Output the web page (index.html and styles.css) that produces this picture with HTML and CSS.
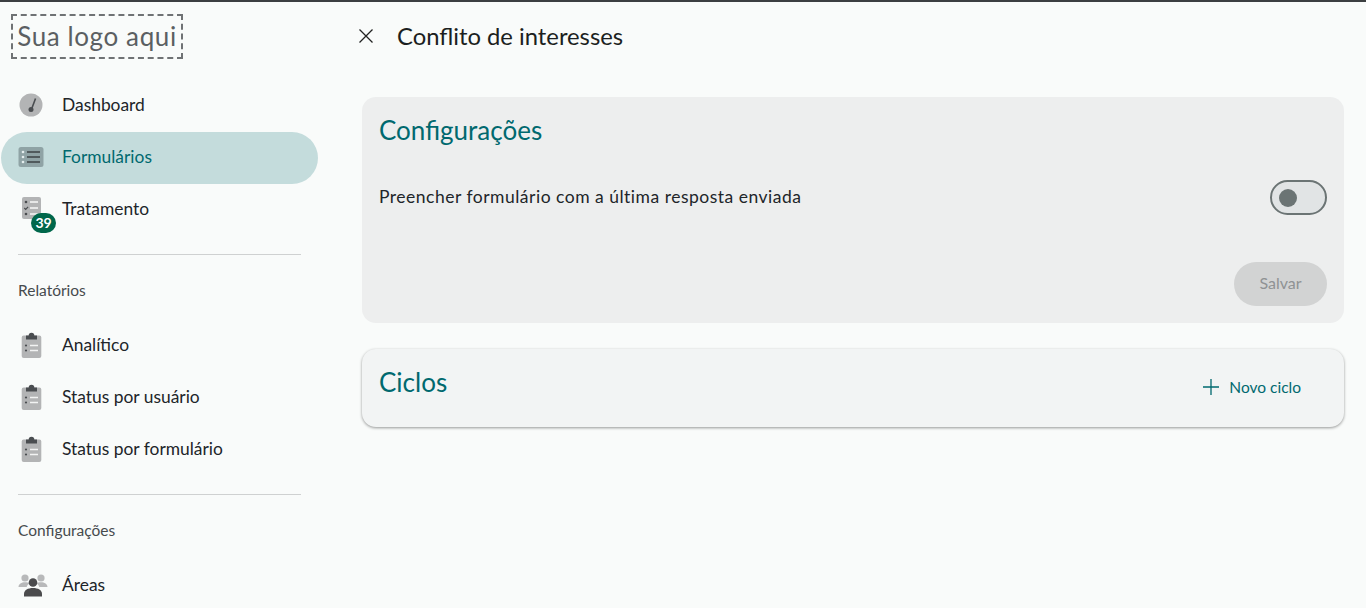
FILE: index.html
```html
<!DOCTYPE html>
<html lang="pt-BR">
<head>
    <meta charset="UTF-8">
    <meta name="viewport" content="width=device-width, initial-scale=1.0">
    <title>Conflito de interesses</title>
    <link rel="stylesheet" href="styles.css">
</head>
<body>
    <div class="app">
        <aside class="sidebar">
            <div class="logo">Sua logo aqui</div>
            <nav class="nav">
                <a class="nav-item">
                    <span class="nav-icon">
                        <svg width="26" height="26" viewBox="0 0 26 26"><circle cx="13" cy="13" r="11.5" fill="#b3b4b5"/><path d="M17.500 6.500 L14 16" stroke="#4a4d50" stroke-width="1.600" fill="none"/><circle cx="13" cy="17.500" r="2.500" fill="#4a4d50"/></svg>
                    </span>
                    Dashboard
                </a>
                <a class="nav-item active">
                    <span class="nav-icon">
                        <svg width="26" height="26" viewBox="0 0 26 26"><rect x="0.500" y="3" width="25" height="20" rx="2.500" fill="#8fa3a5"/><path d="M9 8h13M9 13h13M9 18h13" stroke="#3e4446" stroke-width="1.700"/><circle cx="5" cy="8" r="1.300" fill="#e4eeee"/><circle cx="5" cy="13" r="1.300" fill="#e4eeee"/><circle cx="5" cy="18" r="1.300" fill="#e4eeee"/></svg>
                    </span>
                    Formulários
                </a>
                <a class="nav-item">
                    <span class="nav-icon">
                        <svg width="26" height="26" viewBox="0 0 26 26"><rect x="4" y="1" width="19" height="22" rx="2" fill="#b3b4b5"/><path d="M12 6h8M12 12h8M12 18h8" stroke="#f7f8f8" stroke-width="1.600"/><circle cx="8" cy="6" r="1.300" fill="#4a4d50"/><path d="M6.300 12l1.400 1.400 2.400-2.600" stroke="#4a4d50" stroke-width="1.200" fill="none"/><circle cx="8" cy="18" r="1.300" fill="#4a4d50"/></svg>
                        <span class="badge">39</span>
                    </span>
                    Tratamento
                </a>
            </nav>
            <hr class="divider">
            <div class="section-label">Relatórios</div>
            <nav class="nav">
                <a class="nav-item">
                    <span class="nav-icon"><svg width="26" height="28" viewBox="0 0 26 28"><use href="#clip"/></svg></span>
                    Analítico
                </a>
                <a class="nav-item">
                    <span class="nav-icon"><svg width="26" height="28" viewBox="0 0 26 28"><use href="#clip"/></svg></span>
                    Status por usuário
                </a>
                <a class="nav-item">
                    <span class="nav-icon"><svg width="26" height="28" viewBox="0 0 26 28"><use href="#clip"/></svg></span>
                    Status por formulário
                </a>
            </nav>
            <hr class="divider second">
            <div class="section-label">Configurações</div>
            <nav class="nav">
                <a class="nav-item">
                    <span class="nav-icon">
                        <svg width="30" height="24" viewBox="0 0 30 24"><circle cx="7" cy="5" r="3.600" fill="#b8b9ba"/><circle cx="23" cy="5" r="3.600" fill="#b8b9ba"/><path d="M0.500 14c0-3 3-4.800 6.500-4.800 2 0 3.500.5 4.500 1.400-1.500 1-2.500 2-2.800 3.400z" fill="#b8b9ba"/><path d="M29.500 14c0-3-3-4.800-6.500-4.800-2 0-3.500.5-4.500 1.400 1.500 1 2.500 2 2.800 3.400z" fill="#b8b9ba"/><circle cx="15" cy="9.500" r="4.300" fill="#4b4b4d"/><path d="M6 23.500v-2.500c0-4 4-6 9-6s9 2 9 6v2.500z" fill="#4b4b4d"/></svg>
                    </span>
                    Áreas
                </a>
            </nav>
        </aside>

        <main class="content">
            <header class="page-header">
                <svg class="close-icon" width="16" height="16" viewBox="0 0 16 16"><path d="M1.500 1.500l13 13M14.500 1.500l-13 13" stroke="#222" stroke-width="1.300"/></svg>
                <h1>Conflito de interesses</h1>
            </header>

            <section class="card settings">
                <h2>Configurações</h2>
                <div class="setting-row">
                    <span class="setting-label">Preencher formulário com a última resposta enviada</span>
                    <span class="switch"><span class="switch-thumb"></span></span>
                </div>
                <div class="card-actions">
                    <button class="btn-save" disabled>Salvar</button>
                </div>
            </section>

            <section class="card cycles">
                <h2>Ciclos</h2>
                <button class="btn-new">
                    <svg width="18" height="18" viewBox="0 0 18 18"><path d="M9 1v16M1 9h16" stroke="#00696f" stroke-width="1.300"/></svg>
                    Novo ciclo
                </button>
            </section>
        </main>
    </div>

    <svg class="icon-defs" width="0" height="0">
        <defs>
            <g id="clip">
                <rect x="3.700" y="4.500" width="19.600" height="22.500" rx="2" fill="#b3b4b5"/>
                <path d="M8 8.500v-4h2.700a2.800 2.800 0 0 1 5.600 0h2.700v4z" fill="#4a4d50"/>
                <circle cx="8" cy="14.500" r="1.100" fill="#4a4d50"/>
                <circle cx="8" cy="19.500" r="1.100" fill="#4a4d50"/>
                <path d="M12 14.500h8M12 19.500h8" stroke="#f2f3f3" stroke-width="1.500"/>
            </g>
        </defs>
    </svg>
</body>
</html>
```

FILE: styles.css
```css
* {
    box-sizing: border-box;
}
html, body {
    height: 100%;
}
body {
    margin: 0;
    overflow: hidden;
    background-color: #f9fbfa;
    border-top: 2px solid #3c3f41;
    font-family: Lato, "Liberation Sans", sans-serif;
    color: #212529;
}
.app {
    display: flex;
    height: 606px;
}
.icon-defs {
    position: absolute;
}

/* sidebar */
.sidebar {
    width: 340px;
    flex-shrink: 0;
    padding-top: 12px;
}
.logo {
    width: 172px;
    height: 45px;
    margin-left: 11px;
    margin-bottom: 21px;
    border: 2px dashed #6f7274;
    font-size: 26px;
    line-height: 40px;
    letter-spacing: 0.6px;
    text-align: center;
    color: #5b5f62;
    white-space: nowrap;
}
.nav {
    display: flex;
    flex-direction: column;
}
.nav-item {
    display: flex;
    align-items: center;
    width: 317px;
    height: 52px;
    margin-left: 1px;
    padding-left: 17px;
    padding-bottom: 3px;
    border-radius: 26px;
    font-size: 17.400px;
    color: #212529;
}
.nav-item.active {
    background-color: #c4dcdc;
    color: #00696f;
}
.nav-icon {
    position: relative;
    display: flex;
    width: 44px;
    flex-shrink: 0;
}
.badge {
    position: absolute;
    left: 13px;
    top: 17px;
    width: 25px;
    height: 20px;
    border-radius: 10px;
    background-color: #00674b;
    color: #fff;
    font-size: 14px;
    font-weight: 700;
    line-height: 20px;
    text-align: center;
}
.divider {
    width: 283px;
    height: 1px;
    margin: 18px 0 0 18px;
    border: 0;
    background-color: #cfd1d1;
}
.divider.second {
    margin-top: 18px;
    margin-bottom: 2px;
}
.section-label {
    margin: 25px 0 20px 18px;
    font-size: 15.500px;
    line-height: 20px;
    color: #464a4d;
}

/* main content */
.content {
    flex: 1;
    padding: 0 22px;
}
.page-header {
    display: flex;
    align-items: center;
    height: 67px;
    margin-bottom: 28px;
}
.close-icon {
    margin-left: -4px;
    margin-right: 23px;
}
.page-header h1 {
    margin: 0;
    font-size: 23.800px;
    font-weight: 400;
    color: #1c1f21;
}
.card {
    border-radius: 14px;
    background-color: #edeeee;
    padding: 0 17px;
}
.card h2 {
    margin: 0;
    font-size: 26px;
    font-weight: 400;
    color: #00696f;
}
.settings {
    height: 226px;
    padding-top: 17px;
}
.setting-row {
    display: flex;
    align-items: center;
    justify-content: space-between;
    margin-top: 34px;
    font-size: 17.500px;
    letter-spacing: 0.5px;
}
.setting-label {
    padding-bottom: 3px;
}
.switch {
    display: flex;
    align-items: center;
    width: 57px;
    height: 35px;
    padding-left: 7px;
    border: 2px solid #6b7474;
    border-radius: 18px;
    background-color: #e1e4e5;
}
.switch-thumb {
    width: 18px;
    height: 18px;
    border-radius: 50%;
    background-color: #6b7474;
}
.card-actions {
    display: flex;
    justify-content: flex-end;
    margin-top: 47px;
}
.btn-save {
    width: 93px;
    height: 44px;
    padding: 0 0 3px;
    border: none;
    border-radius: 22px;
    background-color: #d2d3d3;
    color: #8f9294;
    font-family: inherit;
    font-size: 16px;
}
.cycles {
    display: flex;
    justify-content: space-between;
    height: 78px;
    margin-top: 26px;
    padding-top: 17px;
    background-color: #f2f4f4;
    box-shadow: 0 1px 3px rgba(0, 0, 0, 0.4);
}
.btn-new {
    display: flex;
    align-items: center;
    gap: 9px;
    height: 41px;
    margin-right: 26px;
    padding: 0;
    border: none;
    background: none;
    color: #00696f;
    font-family: inherit;
    font-size: 15.500px;
}
```
